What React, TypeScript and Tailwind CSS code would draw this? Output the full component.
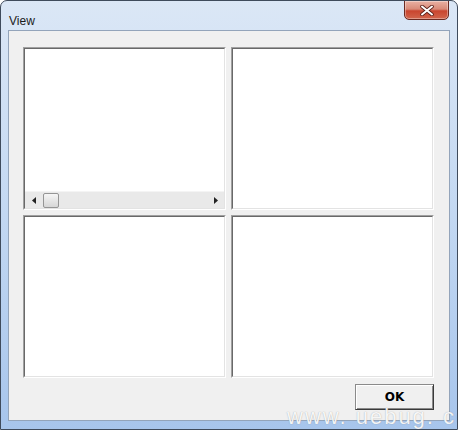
import React from "react";

function Pane({ children }: { children?: React.ReactNode }) {
  return (
    <div className="flex border border-t-[#a0a0a0] border-l-[#a0a0a0] border-r-white border-b-white">
      <div className="flex-1 flex flex-col bg-white border border-t-[#696969] border-l-[#696969] border-r-[#e3e3e3] border-b-[#e3e3e3]">
        {children}
      </div>
    </div>
  );
}

function HScroll() {
  return (
    <div className="h-[17px] flex items-center bg-[#e9e9e9] border-t border-[#f4f4f4]">
      <div className="w-[17px] h-full flex items-center justify-center">
        <svg width="4" height="7" viewBox="0 0 4 7">
          <path d="M4 0 L0 3.5 L4 7 Z" fill="#222" />
        </svg>
      </div>
      <div className="ml-[1px] w-[16px] h-[15px] rounded-[2px] border border-[#959595] bg-gradient-to-b from-[#f6f6f6] to-[#d6d6d6]" />
      <div className="flex-1" />
      <div className="w-[17px] h-full flex items-center justify-center">
        <svg width="4" height="7" viewBox="0 0 4 7">
          <path d="M0 0 L4 3.5 L0 7 Z" fill="#222" />
        </svg>
      </div>
    </div>
  );
}

export default function App() {
  return (
    <div
      className="relative w-[458px] h-[430px] overflow-hidden rounded-t-[7px] border border-[#3f4b5c] bg-gradient-to-b from-[#dbe7f6] via-[#c3d8f2] to-[#a7c5ec] flex flex-col"
      style={{ fontFamily: '"Liberation Sans", Arial, sans-serif' }}
    >
      {/* Title bar */}
      <div className="h-[29px] shrink-0 pl-[8px] pt-[7px]">
        <span className="text-[12px] leading-[15px] text-[#1b1b1b]">View</span>
      </div>

      {/* Close button */}
      <div className="absolute top-[-1px] right-[8px] w-[45px] h-[20px] rounded-b-[5px] border border-[#6a2a22] bg-[linear-gradient(to_bottom,#eab1a3_0%,#d98a78_45%,#c9452f_55%,#d1654c_100%)] flex items-center justify-center shadow-[inset_0_0_0_1px_rgba(255,255,255,0.35)]">
        <svg width="14" height="11" viewBox="0 0 14 11">
          <path d="M2 1.5 L12 9.5 M12 1.5 L2 9.5" stroke="#5a1f18" strokeWidth="3.6" strokeLinecap="round" />
          <path d="M2 1.5 L12 9.5 M12 1.5 L2 9.5" stroke="#ffffff" strokeWidth="2" strokeLinecap="round" />
        </svg>
      </div>

      {/* Client area */}
      <div className="mx-[7px] h-[391px] shrink-0 border border-[#93a4ba] bg-[#f0f0f0] pl-[14px] pr-[15px] pt-[16px] pb-[10px] flex flex-col">
        <div className="grid grid-cols-2 grid-rows-[163px_163px] gap-x-[5px] gap-y-[5px]">
          <Pane>
            <div className="flex-1" />
            <HScroll />
          </Pane>
          <Pane />
          <Pane />
          <Pane />
        </div>
        <div className="mt-[6px] flex justify-end">
          <div className="w-[79px] h-[26px] flex items-center justify-center bg-[#f0f0f0] border border-t-[#8a8a8a] border-l-[#8a8a8a] border-r-[#3a3a3a] border-b-[#3a3a3a] shadow-[inset_1px_1px_0_#ffffff,inset_-1px_-1px_0_#8a8a8a]">
            <span className="font-bold leading-none text-black" style={{ fontFamily: '"DejaVu Sans", sans-serif', fontSize: "12px" }}>
              OK
            </span>
          </div>
        </div>
      </div>

      {/* Watermark */}
      <div
        className="absolute left-[286px] top-[403px] whitespace-nowrap text-[22px] leading-[26px] tracking-[2px] text-white/90"
        style={{ textShadow: "0 0 1px rgba(90,90,90,0.55)" }}
      >
        www. uebug. cc
      </div>
    </div>
  );
}
